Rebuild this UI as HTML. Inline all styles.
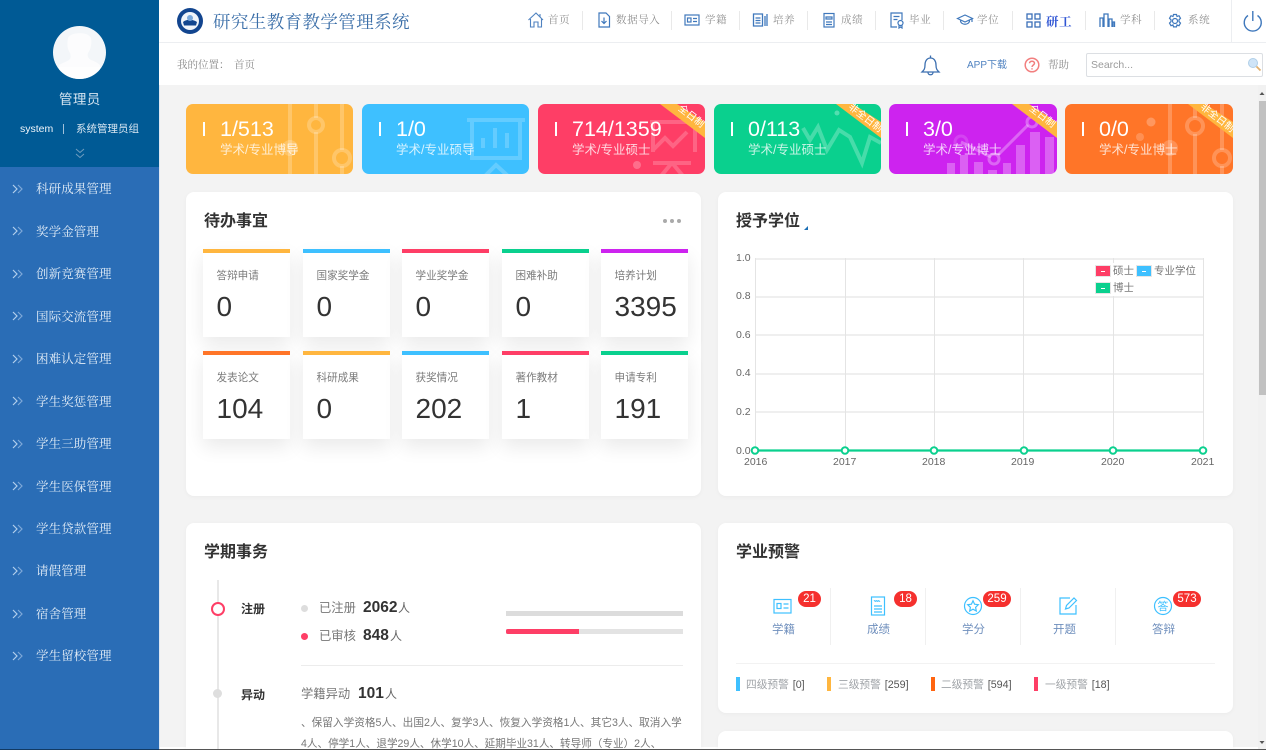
<!DOCTYPE html>
<html lang="zh"><head><meta charset="utf-8"><title>研究生教育教学管理系统</title>
<style>
*{box-sizing:border-box;margin:0;padding:0}
html,body{width:1266px;height:750px;overflow:hidden;background:#f3f3f3;font-family:"Liberation Sans","Noto Sans CJK SC",sans-serif}
.a{position:absolute}
#stage{position:relative;width:1266px;height:750px;overflow:hidden}
.t{position:absolute;white-space:nowrap;line-height:1}
.s{font-family:"Liberation Serif","Noto Serif CJK SC",serif}
.side{left:0;top:167px;width:159px;height:583px;background:#2a6db6}
.mi{position:absolute;left:36px;color:#e3edf7;font-size:12.5px;line-height:16px;white-space:nowrap;font-family:"Liberation Serif","Noto Serif CJK SC",serif;letter-spacing:.1px;margin-top:1px}
.ch{position:absolute;left:12px;width:12px;height:10px}
.nl{position:absolute;top:11px;width:1px;height:19px;background:#e9e9e9}
.nt{position:absolute;top:15px;font-size:10.5px;line-height:12px;color:#8f8f8f;white-space:nowrap;font-family:"Liberation Serif","Noto Serif CJK SC",serif;letter-spacing:.6px}
.ni{position:absolute;top:11px;width:18px;height:18px}
.card{position:absolute;top:104px;height:70px;border-radius:7px;overflow:hidden;color:#fff}
.card .bar{position:absolute;left:17px;top:18px;width:2px;height:14px;background:#fff}
.card .n{position:absolute;left:34px;top:13px;font-size:21.5px;line-height:24px;white-space:nowrap}
.card .l{position:absolute;left:34px;top:37px;margin-top:1px;font-size:12.5px;line-height:16px;white-space:nowrap;color:#ffffffc8}
.card svg.bg{position:absolute;left:0;top:0}
.card svg.rib{position:absolute;right:0;top:0;overflow:visible}
.rib polygon{fill:#ffb63f}
.rib text{font-size:10px;fill:#fff;text-anchor:middle;dominant-baseline:central}
.panel{position:absolute;background:#fff;border-radius:8px;box-shadow:0 1px 4px #0000000a}
.h{position:absolute;font-size:16px;font-weight:bold;color:#333;line-height:20px;white-space:nowrap;margin-top:1px}
.tile{position:absolute;width:86.5px;height:88px;background:#fff;box-shadow:0 8px 18px #00000016}
.tile i{position:absolute;left:0;top:0;width:100%;height:3.5px}
.tile b{position:absolute;left:13.5px;top:20px;font-weight:normal;font-size:10.6px;line-height:14px;color:#7b7b7b;white-space:nowrap}
.tile u{position:absolute;left:13.5px;top:41px;text-decoration:none;font-size:28px;line-height:34px;color:#333}
.yl{position:absolute;font-size:10.5px;color:#666;line-height:12px;white-space:nowrap}
.gl{position:absolute;background:#e4e4e4}
.gh{position:absolute;background:#efefef;left:755px;width:448px;height:2px}
.bd{position:absolute;height:16px;border-radius:8px;background:#f5302e;color:#fff;font-size:11.5px;line-height:16px;text-align:center}
.wl{position:absolute;top:623px;font-size:11.5px;line-height:14px;color:#6f8fbd;white-space:nowrap}
.wi{position:absolute;top:596px;width:20px;height:20px}
.wd{position:absolute;top:588px;width:1px;height:57px;background:#f0f0f0}
.lv{position:absolute;top:677px;width:4px;height:14px}
.lt{position:absolute;top:679px;font-size:10.7px;line-height:13px;white-space:nowrap;color:#a0a4a8}
.lt em{font-style:normal;color:#555;margin-left:4px}
</style></head><body><div id="stage">

<!-- sidebar -->
<div class="a" style="left:0;top:0;width:159px;height:167px;background:#005a95"></div>
<div class="a side"></div>
<div class="a" style="left:159px;top:85px;width:1px;height:665px;background:#dfe8f2"></div>
<div class="a" style="left:160px;top:747px;width:1098px;height:2px;background:#fff"></div>
<div class="a" style="left:53px;top:26px;width:53px;height:53px;border-radius:50%;background:#f3f6f9;overflow:hidden">
<svg width="53" height="53"><path d="M15 12c2-6 20-7 23 0 1 5 0 11-3 15-1 3 0 5 3 7 3 1 7 3 9 5v14H6V39c3-2 7-3 10-5 2-2 2-4 1-7-3-4-3-10-2-15z" fill="#fff" opacity=".7"/><path d="M0 41h53v12H0z" fill="#fff" opacity=".5"/></svg></div>
<div class="t" style="left:59px;top:93px;width:42px;font-size:13.5px;color:#d6e5f1;letter-spacing:.4px">管理员</div>
<div class="t" style="left:20px;top:124px;font-size:10.5px;color:#f0f5fa">system</div>
<div class="a" style="left:63px;top:124px;width:1px;height:10px;background:#9fc0da"></div>
<div class="t" style="left:76px;top:124px;font-size:10.5px;color:#d6e5f1">系统管理员组</div>
<svg class="a" style="left:74px;top:147px" width="12" height="12" fill="none" stroke="#6f9dbf" stroke-width="1"><path d="M2 2l4 3.5L10 2M2 7l4 3.5L10 7"/></svg>

<svg class="ch" style="top:184px"><path d="M1 1l4 4-4 4" fill="none" stroke="#b3cfec" stroke-width="1.200"/><path d="M6 1l4 4-4 4" fill="none" stroke="#7ea8d8" stroke-width="1.200"/></svg><div class="mi" style="top:180px">科研成果管理</div>
<svg class="ch" style="top:226px"><path d="M1 1l4 4-4 4" fill="none" stroke="#b3cfec" stroke-width="1.200"/><path d="M6 1l4 4-4 4" fill="none" stroke="#7ea8d8" stroke-width="1.200"/></svg><div class="mi" style="top:223px">奖学金管理</div>
<svg class="ch" style="top:269px"><path d="M1 1l4 4-4 4" fill="none" stroke="#b3cfec" stroke-width="1.200"/><path d="M6 1l4 4-4 4" fill="none" stroke="#7ea8d8" stroke-width="1.200"/></svg><div class="mi" style="top:265px">创新竞赛管理</div>
<svg class="ch" style="top:311px"><path d="M1 1l4 4-4 4" fill="none" stroke="#b3cfec" stroke-width="1.200"/><path d="M6 1l4 4-4 4" fill="none" stroke="#7ea8d8" stroke-width="1.200"/></svg><div class="mi" style="top:308px">国际交流管理</div>
<svg class="ch" style="top:354px"><path d="M1 1l4 4-4 4" fill="none" stroke="#b3cfec" stroke-width="1.200"/><path d="M6 1l4 4-4 4" fill="none" stroke="#7ea8d8" stroke-width="1.200"/></svg><div class="mi" style="top:350px">困难认定管理</div>
<svg class="ch" style="top:396px"><path d="M1 1l4 4-4 4" fill="none" stroke="#b3cfec" stroke-width="1.200"/><path d="M6 1l4 4-4 4" fill="none" stroke="#7ea8d8" stroke-width="1.200"/></svg><div class="mi" style="top:393px">学生奖惩管理</div>
<svg class="ch" style="top:439px"><path d="M1 1l4 4-4 4" fill="none" stroke="#b3cfec" stroke-width="1.200"/><path d="M6 1l4 4-4 4" fill="none" stroke="#7ea8d8" stroke-width="1.200"/></svg><div class="mi" style="top:435px">学生三助管理</div>
<svg class="ch" style="top:481px"><path d="M1 1l4 4-4 4" fill="none" stroke="#b3cfec" stroke-width="1.200"/><path d="M6 1l4 4-4 4" fill="none" stroke="#7ea8d8" stroke-width="1.200"/></svg><div class="mi" style="top:478px">学生医保管理</div>
<svg class="ch" style="top:524px"><path d="M1 1l4 4-4 4" fill="none" stroke="#b3cfec" stroke-width="1.200"/><path d="M6 1l4 4-4 4" fill="none" stroke="#7ea8d8" stroke-width="1.200"/></svg><div class="mi" style="top:520px">学生贷款管理</div>
<svg class="ch" style="top:566px"><path d="M1 1l4 4-4 4" fill="none" stroke="#b3cfec" stroke-width="1.200"/><path d="M6 1l4 4-4 4" fill="none" stroke="#7ea8d8" stroke-width="1.200"/></svg><div class="mi" style="top:562px">请假管理</div>
<svg class="ch" style="top:609px"><path d="M1 1l4 4-4 4" fill="none" stroke="#b3cfec" stroke-width="1.200"/><path d="M6 1l4 4-4 4" fill="none" stroke="#7ea8d8" stroke-width="1.200"/></svg><div class="mi" style="top:605px">宿舍管理</div>
<svg class="ch" style="top:651px"><path d="M1 1l4 4-4 4" fill="none" stroke="#b3cfec" stroke-width="1.200"/><path d="M6 1l4 4-4 4" fill="none" stroke="#7ea8d8" stroke-width="1.200"/></svg><div class="mi" style="top:647px">学生留校管理</div>

<!-- header -->
<div class="a" style="left:159px;top:0;width:1107px;height:43px;background:#fff;border-bottom:1px solid #eceef1"></div>
<div class="a" style="left:159px;top:43px;width:1107px;height:42px;background:#fff"></div>
<svg class="a" style="left:177px;top:8px" width="26" height="26"><circle cx="13" cy="13" r="13" fill="#12458f"/><circle cx="13" cy="13" r="9" fill="#f0f4fa"/><path d="M6 14c3-3 10-3 14 0l-1 3.500H7z" fill="#12458f"/><circle cx="13" cy="10" r="3" fill="#7aa8db"/></svg>
<div class="t s" style="left:213px;top:12px;font-size:17.5px;line-height:20px;color:#3a6ea8;letter-spacing:.4px">研究生教育教学管理系统</div>

<svg class="ni" style="left:527px" viewBox="0 0 18 18" fill="none" stroke="#4f82c0" stroke-width="1.100"><path d="M1.500 9L9 2l7 7M3.500 8v8h3.500v-5h4v5h3.500V8"/><path d="M13 3v3"/></svg><div class="nt" style="left:548px">首页</div><div class="nl" style="left:582px"></div>
<svg class="ni" style="left:595px" viewBox="0 0 18 18" fill="none" stroke="#3f78bc" stroke-width="1.200"><path d="M4 2h7l3.500 3.500V16H4z"/><path d="M9 6.500v6M6.500 10L9 12.500 11.500 10"/></svg><div class="nt" style="left:616px">数据导入</div><div class="nl" style="left:671px"></div>
<svg class="ni" style="left:683px" viewBox="0 0 18 18" fill="none" stroke="#3f78bc" stroke-width="1.200"><rect x="2" y="4" width="14" height="10"/><rect x="4.500" y="7" width="3.500" height="4"/><path d="M10 7.500h4M10 10.500h4"/></svg><div class="nt" style="left:705px">学籍</div><div class="nl" style="left:739px"></div>
<svg class="ni" style="left:751px" viewBox="0 0 18 18" fill="none" stroke="#3f78bc" stroke-width="1.300"><path d="M2.500 3h9v12h-9zM4.500 7h5M4.500 9.500h5M4.500 12h5M14 5v10M16 3v12"/></svg><div class="nt" style="left:773px">培养</div><div class="nl" style="left:807px"></div>
<svg class="ni" style="left:820px" viewBox="0 0 18 18" fill="none" stroke="#3f78bc" stroke-width="1.200"><rect x="4" y="2.500" width="10" height="13.500"/><path d="M6 6h6v2H6zM6 11h6M6 13.500h6"/></svg><div class="nt" style="left:841px">成绩</div><div class="nl" style="left:875px"></div>
<svg class="ni" style="left:888px" viewBox="0 0 18 18" fill="none" stroke="#3f78bc" stroke-width="1.200"><path d="M9 16H3V2h11v7M5.500 5.500h6M5.500 8.500h4"/><circle cx="12.500" cy="12" r="2.500"/><path d="M11 14.500V17l1.500-1 1.500 1v-2.500"/></svg><div class="nt" style="left:909px">毕业</div><div class="nl" style="left:943px"></div>
<svg class="ni" style="left:956px" viewBox="0 0 18 18" fill="none" stroke="#3f78bc" stroke-width="1.200"><path d="M1.500 7.500L9 4l7.500 3.500L9 11z"/><path d="M4.500 9.500c0 5 9 5 9 0M16 8v3"/></svg><div class="nt" style="left:977px">学位</div><div class="nl" style="left:1012px"></div>
<svg class="ni" style="left:1025px" viewBox="0 0 18 18" fill="none" stroke="#3b6fb8" stroke-width="1.300"><rect x="2" y="3" width="5" height="5"/><rect x="10" y="3" width="5" height="5"/><rect x="2" y="11" width="5" height="5"/><rect x="10" y="11" width="5" height="5"/></svg><div class="nt" style="left:1046px;top:15px;font-size:12.500px;line-height:14px;color:#2f55d4;font-weight:bold">研工</div><div class="nl" style="left:1085px"></div>
<svg class="ni" style="left:1098px" viewBox="0 0 18 18" fill="none" stroke="#3f78bc" stroke-width="1.300"><path d="M2 16V7h3v9M6 16V3h4v13M11 16V8h3v8M15 16v-5h1.500v5"/></svg><div class="nt" style="left:1120px">学科</div><div class="nl" style="left:1154px"></div>
<svg class="ni" style="left:1166px" viewBox="0 0 18 18" fill="none" stroke="#3f78bc" stroke-width="1.200"><circle cx="9" cy="10" r="2.500"/><path d="M7.500 3.500h3l.5 2 2-.8 1.500 2.600-1.500 1.500v1.800l1.500 1.500-1.500 2.600-2-.8-.5 2h-3l-.5-2-2 .8-1.500-2.600L5 10.600V8.800L3.500 7.300 5 4.700l2 .8z"/></svg><div class="nt" style="left:1188px">系统</div>
<div class="a" style="left:1231px;top:0;width:1px;height:42px;background:#eceef1"></div>
<svg class="a" style="left:1242px;top:9px" width="22" height="24" fill="none" stroke="#3f78bc" stroke-width="1.400"><path d="M6 6.500a8.500 8.500 0 1 0 9.500 0M10.800 2v10"/></svg>

<!-- subheader -->
<div class="t s" style="left:177px;top:60px;font-size:10.500px;line-height:12px;color:#8a8a8a">我的位置：</div>
<div class="t s" style="left:234px;top:60px;font-size:10.500px;line-height:12px;color:#8a8a8a">首页</div>
<svg class="a" style="left:920px;top:54px" width="21" height="22" fill="none" stroke="#3c6fb0" stroke-width="1.300"><path d="M2 18c2-2 3-3 3-7 0-4 2-7 5.500-7S16 7 16 11c0 4 1 5 3 7zM10.500 1.500v2.500M8 18.500c0 3 5 3 5 0"/></svg>
<div class="t" style="left:967px;top:60px;font-size:10px;line-height:12px;color:#4f82c0">APP下载</div>
<svg class="a" style="left:1024px;top:57px" width="16" height="16" fill="none" stroke="#f27f7f" stroke-width="1.500"><circle cx="8" cy="8" r="6.800"/><path d="M5.500 6.300C5.500 3.500 10.500 3.500 10.500 6.300 10.500 8 8 8 8 10M8 11.300v1.200"/></svg>
<div class="t s" style="left:1048px;top:60px;font-size:10.500px;line-height:12px;color:#8a8a8a">帮助</div>
<div class="a" style="left:1086px;top:53px;width:177px;height:24px;border:1px solid #dcdfe3;border-radius:2px;background:#fff"></div>
<div class="t" style="left:1091px;top:59px;font-size:10.500px;line-height:12px;color:#9b9b9b">Search...</div>
<svg class="a" style="left:1247px;top:57px" width="15" height="15"><circle cx="6" cy="6" r="4.500" fill="#cfe4f7" stroke="#b0cfe8"/><path d="M9.500 9.500l4 4" stroke="#e0b070" stroke-width="1.800"/></svg>

<!-- stat cards -->
<div class="card" style="left:186px;width:167px;background:#ffb63f">
<svg class="bg" width="167" height="70" fill="none" stroke="#fff" stroke-opacity=".22" stroke-width="4"><path d="M104 0v70M130 0v14M130 28v42M156 0v46M156 62v8"/><circle cx="130" cy="21" r="7"/><circle cx="156" cy="54" r="8"/><circle cx="104" cy="44" r="8" fill="#fff" fill-opacity=".2" stroke="none"/></svg>
<div class="bar"></div><div class="n">1/513</div><div class="l">学术/专业博导</div></div>

<div class="card" style="left:362px;width:167px;background:#3ec0ff">
<svg class="bg" width="167" height="70" fill="none" stroke="#fff" stroke-opacity=".2" stroke-width="4"><path d="M105 16h58M110 18v36h48V18M121 44V34M133 44V24M145 44V29" /><path d="M123 72l11-11 12 11"/></svg>
<div class="bar"></div><div class="n">1/0</div><div class="l">学术/专业硕导</div></div>

<div class="card" style="left:538px;width:167px;background:#fe3e66">
<svg class="bg" width="167" height="70" fill="none" stroke="#fff" stroke-opacity=".2" stroke-width="4"><path d="M112 18h50M115 18v30M157 18v30M115 46l12-12 8 8 14-14M115 59h38M133 60l-10 12M135 60l10 12"/><circle cx="99" cy="61" r="4" fill="#fff" fill-opacity=".25" stroke="none"/></svg>
<div class="bar"></div><div class="n">714/1359</div><div class="l">学术/专业硕士</div>
<svg class="rib" width="46" height="36"><polygon points="1,0 18,0 46,18 46,34"/><text transform="translate(32 12.700) rotate(38)">全日制</text></svg></div>

<div class="card" style="left:714px;width:167px;background:#0ad08e">
<svg class="bg" width="167" height="70" fill="none" stroke="#fff" stroke-opacity=".25" stroke-width="4"><path d="M89 24l7 12 8-13 9 23 12-20 11 7 12 26 8-26 11 6"/><circle cx="123" cy="9" r="2.500" fill="#fff" fill-opacity=".3" stroke="none"/></svg>
<div class="bar"></div><div class="n">0/113</div><div class="l">学术/专业硕士</div>
<svg class="rib" width="46" height="36"><polygon points="1,0 18,0 46,18 46,34"/><text transform="translate(30 14.300) rotate(38)">非全日制</text></svg></div>

<div class="card" style="left:889px;width:168px;background:#cd23ef">
<svg class="bg" width="168" height="70" fill="#fff" fill-opacity=".28"><rect x="58" y="59" width="8" height="12"/><rect x="71" y="51" width="8" height="20"/><rect x="85" y="58" width="9" height="13"/><rect x="99" y="66" width="9" height="5"/><rect x="114" y="59" width="8" height="12"/><rect x="127" y="41" width="9" height="30"/><rect x="141" y="28" width="10" height="43"/><rect x="156" y="33" width="9" height="38"/><path d="M72 38l30 15M109 51l30-30" fill="none" stroke="#fff" stroke-opacity=".3" stroke-width="3"/><circle cx="105" cy="55" r="5" fill="none" stroke="#fff" stroke-opacity=".3" stroke-width="3"/><circle cx="143" cy="18" r="5" fill="none" stroke="#fff" stroke-opacity=".3" stroke-width="3"/><circle cx="72" cy="38" r="6" fill="none" stroke="#fff" stroke-opacity=".15" stroke-width="3"/></svg>
<div class="bar"></div><div class="n">3/0</div><div class="l">学术/专业博士</div>
<svg class="rib" width="46" height="36"><polygon points="1,0 18,0 46,18 46,34"/><text transform="translate(31 12.700) rotate(38)">全日制</text></svg></div>

<div class="card" style="left:1065px;width:168px;background:#ff7528">
<svg class="bg" width="168" height="70" fill="none" stroke="#fff" stroke-opacity=".22" stroke-width="4"><path d="M105 0v70M130 0v14M130 30v40M157 0v46M157 62v8"/><circle cx="130" cy="22" r="8"/><circle cx="157" cy="54" r="8"/><circle cx="105" cy="44" r="8" fill="#fff" fill-opacity=".2" stroke="none"/><circle cx="86" cy="18" r="4.500" fill="#fff" fill-opacity=".25" stroke="none"/><circle cx="75" cy="33" r="4" fill="#fff" fill-opacity=".2" stroke="none"/></svg>
<div class="bar"></div><div class="n">0/0</div><div class="l">学术/专业博士</div>
<svg class="rib" width="46" height="36"><polygon points="1,0 18,0 46,18 46,34"/><text transform="translate(30 14.300) rotate(38)">非全日制</text></svg></div>

<!-- todo panel -->
<div class="panel" style="left:186px;top:192px;width:515px;height:304px"></div>
<div class="h" style="left:204px;top:211px">待办事宜</div>
<div class="a" style="left:663px;top:219px;width:4px;height:4px;border-radius:50%;background:#aaa"></div>
<div class="a" style="left:670px;top:219px;width:4px;height:4px;border-radius:50%;background:#aaa"></div>
<div class="a" style="left:677px;top:219px;width:4px;height:4px;border-radius:50%;background:#aaa"></div>

<div class="tile" style="left:203px;top:249px"><i style="background:#ffb63f"></i><b>答辩申请</b><u>0</u></div>
<div class="tile" style="left:303px;top:249px"><i style="background:#3ec0ff"></i><b>国家奖学金</b><u>0</u></div>
<div class="tile" style="left:402px;top:249px"><i style="background:#fe3e66"></i><b>学业奖学金</b><u>0</u></div>
<div class="tile" style="left:502px;top:249px"><i style="background:#0ad08e"></i><b>困难补助</b><u>0</u></div>
<div class="tile" style="left:601px;top:249px"><i style="background:#cd23ef"></i><b>培养计划</b><u>3395</u></div>
<div class="tile" style="left:203px;top:351px"><i style="background:#ff7528"></i><b>发表论文</b><u>104</u></div>
<div class="tile" style="left:303px;top:351px"><i style="background:#ffb63f"></i><b>科研成果</b><u>0</u></div>
<div class="tile" style="left:402px;top:351px"><i style="background:#3ec0ff"></i><b>获奖情况</b><u>202</u></div>
<div class="tile" style="left:502px;top:351px"><i style="background:#fe3e66"></i><b>著作教材</b><u>1</u></div>
<div class="tile" style="left:601px;top:351px"><i style="background:#0ad08e"></i><b>申请专利</b><u>191</u></div>

<!-- chart panel -->
<div class="panel" style="left:718px;top:192px;width:515px;height:304px"></div>
<div class="h" style="left:736px;top:211px">授予学位</div>
<svg class="a" style="left:803px;top:225px" width="6" height="6"><path d="M5 1v4H1z" fill="#1c6fb5"/></svg>

<div class="gh" style="top:257.500px"></div>
<div class="gh" style="top:295.500px"></div>
<div class="gh" style="top:334px"></div>
<div class="gh" style="top:372.500px"></div>
<div class="gh" style="top:411px"></div>
<div class="gl" style="left:755px;top:258px;width:1px;height:192px"></div>
<div class="gl" style="left:845px;top:258px;width:1px;height:192px"></div>
<div class="gl" style="left:934px;top:258px;width:1px;height:192px"></div>
<div class="gl" style="left:1023px;top:258px;width:1px;height:192px"></div>
<div class="gl" style="left:1113px;top:258px;width:1px;height:192px"></div>
<div class="gl" style="left:1203px;top:258px;width:1px;height:192px"></div>
<div class="yl" style="left:736px;top:252px">1.0</div>
<div class="yl" style="left:736px;top:290px">0.8</div>
<div class="yl" style="left:736px;top:329px">0.6</div>
<div class="yl" style="left:736px;top:367px">0.4</div>
<div class="yl" style="left:736px;top:406px">0.2</div>
<div class="yl" style="left:736px;top:445px">0.0</div>
<div class="yl" style="left:744px;top:456px">2016</div>
<div class="yl" style="left:833px;top:456px">2017</div>
<div class="yl" style="left:922px;top:456px">2018</div>
<div class="yl" style="left:1011px;top:456px">2019</div>
<div class="yl" style="left:1101px;top:456px">2020</div>
<div class="yl" style="left:1191px;top:456px">2021</div>
<svg class="a" style="left:745px;top:440px" width="470" height="20"><path d="M10 10.500H458" stroke="#0ad08e" stroke-width="2.200"/><g fill="#fff" stroke="#0ad08e" stroke-width="2"><circle cx="10" cy="10.500" r="3.300"/><circle cx="100" cy="10.500" r="3.300"/><circle cx="189" cy="10.500" r="3.300"/><circle cx="279" cy="10.500" r="3.300"/><circle cx="368" cy="10.500" r="3.300"/><circle cx="458" cy="10.500" r="3.300"/></g></svg>

<div class="a" style="left:1094px;top:263px;width:105px;height:33px;background:#fff"></div>
<svg class="a" style="left:1095px;top:265px" width="60" height="30"><g stroke="#e6e6e6"><rect x=".5" y=".5" width="15" height="11" fill="#fe3e66"/><rect x="41.500" y=".5" width="15" height="11" fill="#3ec0ff"/><rect x=".5" y="17.500" width="15" height="11" fill="#0ad08e"/></g><g stroke="#fff"><path d="M6 6.500h4M47 6.500h4M6 23.500h4"/></g></svg>
<div class="t" style="left:1113px;top:265px;font-size:10.500px;line-height:12px;color:#777">硕士</div>
<div class="t" style="left:1154px;top:265px;font-size:10.500px;line-height:12px;color:#777">专业学位</div>
<div class="t" style="left:1113px;top:282px;font-size:10.500px;line-height:12px;color:#777">博士</div>

<!-- semester panel -->
<div class="panel" style="left:186px;top:523px;width:515px;height:240px"></div>
<div class="h" style="left:204px;top:542px">学期事务</div>
<div class="a" style="left:217px;top:580px;width:2px;height:170px;background:#e8e8e8"></div>
<div class="a" style="left:211px;top:602px;width:14px;height:14px;border-radius:50%;border:2px solid #fe3e66;background:#fff"></div>
<div class="t" style="left:241px;top:602px;font-size:12px;line-height:14px;font-weight:bold;color:#333">注册</div>
<div class="a" style="left:301px;top:605px;width:7px;height:7px;border-radius:50%;background:#ddd"></div>
<div class="t" style="left:319px;top:601px;font-size:12.300px;line-height:14px;color:#777">已注册</div>
<div class="t" style="left:363px;top:599px;font-size:15.500px;line-height:17px;font-weight:bold;color:#333">2062</div>
<div class="t" style="left:398px;top:601px;font-size:12px;line-height:14px;color:#666">人</div>
<div class="a" style="left:301px;top:633px;width:7px;height:7px;border-radius:50%;background:#fe3e66"></div>
<div class="t" style="left:319px;top:629px;font-size:12.300px;line-height:14px;color:#777">已审核</div>
<div class="t" style="left:363px;top:627px;font-size:15.500px;line-height:17px;font-weight:bold;color:#333">848</div>
<div class="t" style="left:390px;top:629px;font-size:12px;line-height:14px;color:#666">人</div>
<div class="a" style="left:506px;top:611px;width:177px;height:5px;background:#dcdcdc"></div>
<div class="a" style="left:506px;top:629px;width:177px;height:5px;background:#e3e3e3"></div>
<div class="a" style="left:506px;top:629px;width:73px;height:5px;background:#fe3e66;border-radius:2px 0 0 2px"></div>
<div class="a" style="left:301px;top:665px;width:382px;height:1px;background:#ececec"></div>
<div class="a" style="left:213px;top:689px;width:9px;height:9px;border-radius:50%;background:#dedede"></div>
<div class="t" style="left:241px;top:688px;font-size:12px;line-height:14px;font-weight:bold;color:#333">异动</div>
<div class="t" style="left:301px;top:687px;font-size:12.300px;line-height:14px;color:#777">学籍异动</div>
<div class="t" style="left:358px;top:685px;font-size:15.500px;line-height:17px;font-weight:bold;color:#333">101</div>
<div class="t" style="left:385px;top:687px;font-size:12px;line-height:14px;color:#666">人</div>
<div class="t" style="left:301px;top:716px;font-size:10.650px;line-height:14px;color:#777">、保留入学资格5人、出国2人、复学3人、恢复入学资格1人、其它3人、取消入学</div>
<div class="t" style="left:301px;top:737px;font-size:10.600px;line-height:14px;color:#777">4人、停学1人、退学29人、休学10人、延期毕业31人、转导师（专业）2人、</div>

<!-- warning panel -->
<div class="panel" style="left:718px;top:523px;width:515px;height:190px"></div>
<div class="h" style="left:736px;top:542px">学业预警</div>
<div class="wd" style="left:830px"></div><div class="wd" style="left:925px"></div><div class="wd" style="left:1020px"></div><div class="wd" style="left:1115px"></div>

<svg class="wi" style="left:772px" viewBox="0 0 20 20" fill="none" stroke="#3ec0ff" stroke-width="1.200"><rect x="2" y="3.500" width="17" height="13.500"/><rect x="5" y="7.500" width="4" height="5"/><path d="M11.500 8h5M11.500 12h5"/></svg>
<div class="bd" style="left:798px;top:591px;width:23px">21</div><div class="wl" style="left:772px">学籍</div>
<svg class="wi" style="left:868px" viewBox="0 0 20 20" fill="none" stroke="#3ec0ff" stroke-width="1.200"><rect x="3.500" y="1" width="13" height="18"/><path d="M6 5c1-1 1 1 2 0s1 1 2 0 1 1 2 0M6 10h8M6 13h8M6 16h8"/></svg>
<div class="bd" style="left:894px;top:591px;width:23px">18</div><div class="wl" style="left:867px">成绩</div>
<svg class="wi" style="left:963px" viewBox="0 0 20 20" fill="none" stroke="#3ec0ff" stroke-width="1.200"><circle cx="10" cy="10" r="8.500"/><path d="M10 4.800l1.600 3.400 3.700.5-2.700 2.600.7 3.700-3.300-1.800-3.300 1.800.7-3.700-2.700-2.600 3.700-.5z"/></svg>
<div class="bd" style="left:983px;top:591px;width:28px">259</div><div class="wl" style="left:962px">学分</div>
<svg class="wi" style="left:1058px" viewBox="0 0 20 20" fill="none" stroke="#3ec0ff" stroke-width="1.200"><path d="M18 9v9H2V2h10"/><path d="M7.500 13l1-3.500L16 2l2.500 2.500-7.500 7.500z"/></svg>
<div class="wl" style="left:1053px">开题</div>
<svg class="wi" style="left:1153px" viewBox="0 0 20 20" fill="none" stroke="#3ec0ff" stroke-width="1.200"><circle cx="10" cy="10" r="8.500"/><text x="10" y="14" font-size="11" text-anchor="middle" fill="#3ec0ff" stroke="none">答</text></svg>
<div class="bd" style="left:1173px;top:591px;width:28px">573</div><div class="wl" style="left:1152px">答辩</div>

<div class="a" style="left:736px;top:663px;width:479px;height:1px;background:#f2f2f2"></div>
<div class="lv" style="left:736px;background:#3ec0ff"></div><div class="lt" style="left:746px">四级预警<em>[0]</em></div>
<div class="lv" style="left:827px;background:#ffb63f"></div><div class="lt" style="left:838px">三级预警<em>[259]</em></div>
<div class="lv" style="left:931px;background:#ff6410"></div><div class="lt" style="left:941px">二级预警<em>[594]</em></div>
<div class="lv" style="left:1034px;background:#fe3e66"></div><div class="lt" style="left:1045px">一级预警<em>[18]</em></div>

<div class="panel" style="left:718px;top:731px;width:515px;height:40px"></div>

<!-- scrollbar -->
<div class="a" style="left:1258px;top:85px;width:8px;height:665px;background:#f1f1f1"></div>
<svg class="a" style="left:1258px;top:90px" width="8" height="8"><path d="M4 2l2.500 3h-5z" fill="#555"/></svg>
<div class="a" style="left:1259px;top:101px;width:7px;height:294px;background:#c1c1c1"></div>
<svg class="a" style="left:1258px;top:738px" width="8" height="8"><path d="M4 6L1.500 3h5z" fill="#555"/></svg>
<div class="a" style="left:0;top:749px;width:1266px;height:1px;background:#555"></div>
<div class="a" style="left:0;top:749px;width:159px;height:1px;background:#123a63"></div>
</div></body></html>
